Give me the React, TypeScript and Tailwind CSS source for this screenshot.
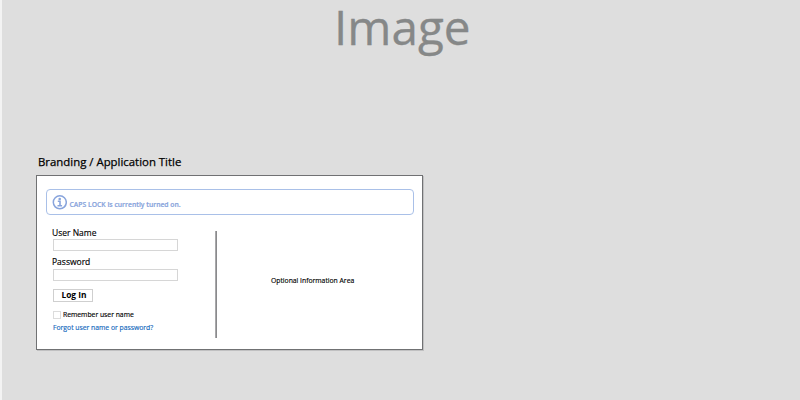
function InfoIcon() {
  return (
    <svg viewBox="0 0 15 15" className="size-[15px] shrink-0" fill="none">
      <circle cx="7.8" cy="7.3" r="6.5" stroke="#88a4dc" strokeWidth="1.5" />
      <circle cx="7.7" cy="4" r="1.3" fill="#88a4dc" />
      <path d="M5.8 6.3h2.2v4.3M5.5 10.7h4.6" stroke="#88a4dc" strokeWidth="1.6" />
    </svg>
  );
}

function Field({ label, type, leading }: { label: string; type: string; leading: string }) {
  return (
    <label className="block h-[29.5px]">
      <span className={`-ml-px block h-[13px] whitespace-nowrap text-[8.5px] [-webkit-text-stroke:0.15px_currentColor] ${leading}`}>{label}</span>
      <input type={type} className="block h-3 w-[125px] border border-[#d6d6d6] bg-white" />
    </label>
  );
}

export default function App() {
  return (
    <main className="flex h-[400px] w-[800px] flex-col items-start overflow-hidden border-l-2 border-[#f3f3f3] bg-[#dedede] font-['Open_Sans',sans-serif] text-black">
      <div className="h-[154px] w-full pl-[332px] text-[47.7px] leading-[54px] text-[#868888] [-webkit-text-stroke:0.3px_currentColor]">Image</div>
      <h1 className="h-[21px] shrink-0 whitespace-nowrap pl-9 text-[11.4px] leading-4 [-webkit-text-stroke:0.25px_currentColor]">Branding / Application Title</h1>
      <section className="ml-[34px] h-[175px] w-[387px] shrink-0 border border-[#707173] bg-white shadow-[1px_1px_0_#c0c0c1]">
        <div className="ml-[9px] mt-[13px] flex h-[26px] w-[368px] items-center rounded-[4px] border border-[#a9c0e8] pl-[5px] text-[#88a4dc]">
          <InfoIcon />
          <span className="ml-[2.5px] mt-[5px] whitespace-nowrap text-[6.8px] font-semibold leading-[10px] [-webkit-text-stroke:0.2px_currentColor]">CAPS LOCK is currently turned on.</span>
        </div>
        <div className="mt-4 flex h-[107px]">
          <form className="-mt-[5px] ml-4 w-[162px] shrink-0">
            <Field label="User Name" type="text" leading="leading-[14px]" />
            <Field label="Password" type="password" leading="leading-3" />
            <button type="button" className="mt-[4px] block h-[13px] w-[40px] whitespace-nowrap border border-[#cfcfcf] bg-white pb-[2px] pl-[2px] text-[8.4px] font-bold leading-[9px]">Log In</button>
            <label className="mt-[8px] flex h-[10px] items-center whitespace-nowrap text-[6.8px] leading-[10px] [-webkit-text-stroke:0.15px_currentColor]">
              <span className="mr-[2px] size-2 border border-[#dcdcdc]" />
              Remember user name
            </label>
            <a className="mt-[3px] block whitespace-nowrap text-[6.8px] leading-[10px] text-[#1269bd] [-webkit-text-stroke:0.15px_currentColor]">Forgot user name or password?</a>
          </form>
          <div className="w-0.5 border-l border-[#a8a8aa] bg-[#8a8a8c]" />
          <div className="flex-1 pl-[54px] pt-[45px] text-[6.8px] leading-[10px] [-webkit-text-stroke:0.15px_currentColor]">Optional Information Area</div>
        </div>
      </section>
    </main>
  );
}
